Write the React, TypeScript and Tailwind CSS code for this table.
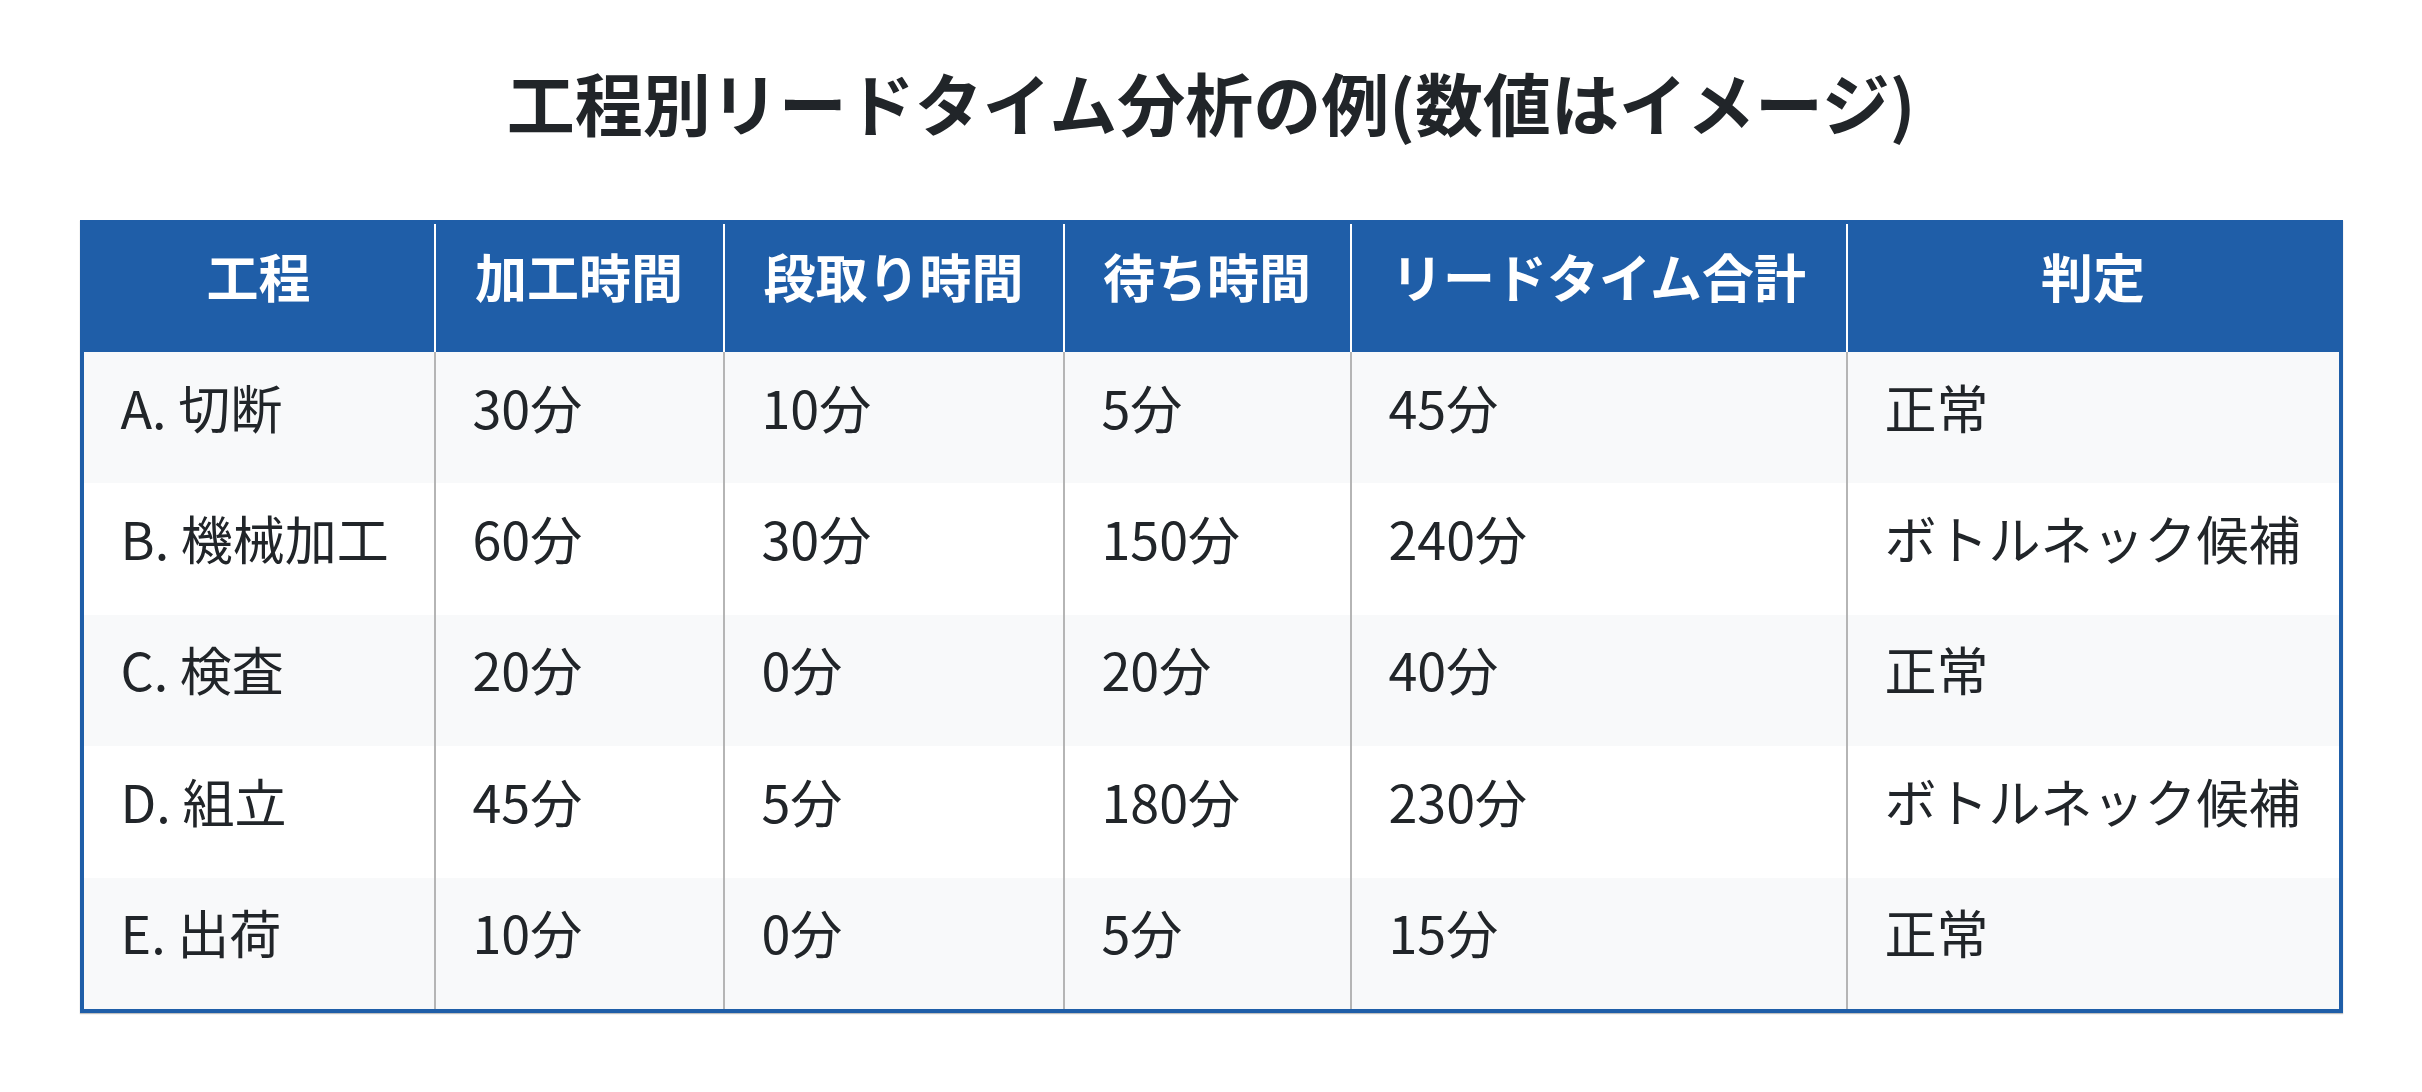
const headers = ["工程", "加工時間", "段取り時間", "待ち時間", "リードタイム合計", "判定"];

const rows = [
  ["A. 切断", "30分", "10分", "5分", "45分", "正常"],
  ["B. 機械加工", "60分", "30分", "150分", "240分", "ボトルネック候補"],
  ["C. 検査", "20分", "0分", "20分", "40分", "正常"],
  ["D. 組立", "45分", "5分", "180分", "230分", "ボトルネック候補"],
  ["E. 出荷", "10分", "0分", "5分", "15分", "正常"],
];

export default function App() {
  return (
    <div
      className="min-h-screen bg-white text-[#212529]"
      style={{ fontFamily: '"Noto Sans CJK JP", "Noto Sans", sans-serif' }}
    >
      <h1 className="pt-[62px] text-center text-[68px] font-bold leading-[80px] text-[#212529]">
        工程別リードタイム分析の例(数値はイメージ)
      </h1>

      <div className="mx-auto mt-[78px] w-[2263px] border-4 border-[#1f5ea8] shadow-[0_1px_1px_rgba(0,0,0,0.25)]">
        <div className="grid grid-cols-[352px_289px_340px_287px_496px_491px] bg-[#1f5ea8]">
          {headers.map((h, i) => (
            <div
              key={h}
              className={`flex h-[128px] items-center justify-center pb-[24px] text-[52px] font-bold text-white ${
                i < headers.length - 1 ? "border-r-2 border-white" : ""
              }`}
            >
              {h}
            </div>
          ))}
        </div>

        {rows.map((row, r) => (
          <div
            key={row[0]}
            className={`grid grid-cols-[352px_289px_340px_287px_496px_491px] ${
              r % 2 === 0 ? "bg-[#f8f9fa]" : "bg-white"
            }`}
          >
            {row.map((cell, i) => (
              <div
                key={i}
                className={`flex h-[131.4px] items-center px-[37px] pb-[22px] text-[52px] whitespace-nowrap ${
                  i < row.length - 1 ? "border-r-2 border-[#b5b5b5]" : ""
                }`}
              >
                {cell}
              </div>
            ))}
          </div>
        ))}
      </div>
    </div>
  );
}
